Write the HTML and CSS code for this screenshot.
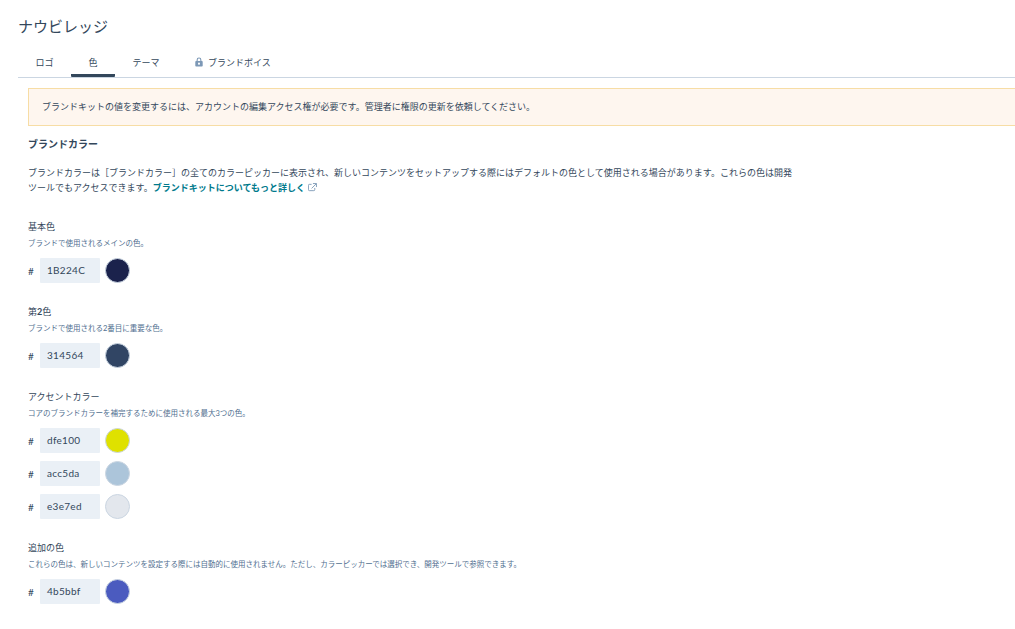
FILE: index.html
```html
<!DOCTYPE html>
<html lang="ja">
<head>
    <title>ナウビレッジ</title>
    <link rel="stylesheet" href="styles.css">
</head>
<body>
    <h1 class="page-title">ナウビレッジ</h1>

    <div class="tabs">
        <div class="tab">ロゴ</div>
        <div class="tab active">色</div>
        <div class="tab">テーマ</div>
        <div class="tab tab-lock">
            <svg class="lock" viewBox="0 0 10 10" width="10" height="10"><path fill="#7c98b6" fill-rule="evenodd" d="M2.6 4V2.9a2.4 2.4 0 0 1 4.8 0V4h.5c.5 0 .8.3.8.8v3.9c0 .5-.3.8-.8.8H2.100c-.5 0-.8-.3-.8-.8V4.800c0-.5.3-.8.8-.8zm1.100 0h2.600V2.900a1.300 1.300 0 0 0-2.600 0zM5 5.500a.9.9 0 0 0-.5 1.700V8h1v-.8A.9.9 0 0 0 5 5.500z"/></svg>
            ブランドボイス
        </div>
    </div>

    <div class="content">
        <div class="notice">ブランドキットの値を変更するには、アカウントの編集アクセス権が必要です。管理者に権限の更新を依頼してください。</div>

        <h2 class="section-title">ブランドカラー</h2>
        <p class="intro">ブランドカラーは［ブランドカラー］の全てのカラーピッカーに表示され、新しいコンテンツをセットアップする際にはデフォルトの色として使用される場合があります。これらの色は開発ツールでもアクセスできます。<a class="more" href="#">ブランドキットについてもっと詳しく<svg class="ext" viewBox="0 0 10 10" width="9" height="9"><path fill="none" stroke="#7c98b6" stroke-width="1" d="M4 1.500H1.500a1 1 0 0 0-1 1v5a1 1 0 0 0 1 1h5a1 1 0 0 0 1-1V5.500M5.500 .6h3.900v3.900M9.200 .8L4 6"/></svg></a></p>

        <div class="group">
            <div class="group-label">基本色</div>
            <div class="group-help">ブランドで使用されるメインの色。</div>
            <div class="color-row">
                <span class="hash">#</span>
                <div class="hex">1B224C</div>
                <div class="swatch swatch-1"></div>
            </div>
        </div>

        <div class="group">
            <div class="group-label">第<b>2</b>色</div>
            <div class="group-help">ブランドで使用される2番目に重要な色。</div>
            <div class="color-row">
                <span class="hash">#</span>
                <div class="hex">314564</div>
                <div class="swatch swatch-2"></div>
            </div>
        </div>

        <div class="group">
            <div class="group-label">アクセントカラー</div>
            <div class="group-help">コアのブランドカラーを補完するために使用される最大3つの色。</div>
            <div class="color-row">
                <span class="hash">#</span>
                <div class="hex">dfe100</div>
                <div class="swatch swatch-3"></div>
            </div>
            <div class="color-row">
                <span class="hash">#</span>
                <div class="hex">acc5da</div>
                <div class="swatch swatch-4"></div>
            </div>
            <div class="color-row">
                <span class="hash">#</span>
                <div class="hex">e3e7ed</div>
                <div class="swatch swatch-5"></div>
            </div>
        </div>

        <div class="group">
            <div class="group-label">追加の色</div>
            <div class="group-help">これらの色は、新しいコンテンツを設定する際には自動的に使用されません。ただし、カラーピッカーでは選択でき、開発ツールで参照できます。</div>
            <div class="color-row">
                <span class="hash">#</span>
                <div class="hex">4b5bbf</div>
                <div class="swatch swatch-6"></div>
            </div>
        </div>
    </div>
</body>
</html>
```

FILE: styles.css
```css
html, body { overflow: hidden; }
body { margin: 0; height: 629px; background: #fff; color: #33475b; font-family: Lato, "Noto Sans CJK JP", sans-serif; font-size: 9px; }

.page-title { margin: 0; padding: 16px 0 0 18px; font-size: 15px; line-height: 20px; font-weight: 400; color: #33475b; }

.tabs { display: flex; margin: 11px 0 0 18px; border-bottom: 1px solid #cbd6e2; height: 30px; }
.tab { box-sizing: border-box; height: 30px; padding-top: 9px; line-height: 13px; text-align: center; margin-right: 0; }
.tab:nth-child(1) { width: 53px; }
.tab:nth-child(2) { width: 44px; }
.tab:nth-child(3) { width: 62px; }
.tab-lock { display: flex; align-items: flex-start; gap: 4px; padding-left: 17px; }
.tab-lock .lock { margin-top: 1px; }
.active { border-bottom: 3px solid #33475b; border-radius: 1px; }

.content { padding: 10px 0 0 28px; }

.notice { box-sizing: border-box; width: 1000px; height: 38px; padding: 0 13px; line-height: 36px; background: #fef6ef; border: 1px solid #f7dda5; }

.section-title { margin: 11px 0 0; font-size: 10px; line-height: 14px; font-weight: 700; }
.intro { margin: 14px 0 0; width: 770px; line-height: 15px; }
.more { color: #007a8c; font-weight: 700; text-decoration: none; }
.ext { margin-left: 3px; vertical-align: -1px; }

.group { margin-bottom: 22px; }
.intro + .group { margin-top: 25px; }
.group-label { font-size: 9px; line-height: 14px; }
.group-label b { font-weight: 700; }
.group-help { margin-top: 3px; font-size: 7.500px; line-height: 13px; color: #516f90; }

.color-row { display: flex; align-items: center; height: 25px; margin-top: 8px; }
.color-row + .color-row { margin-top: 8px; }
.hash { width: 12px; font-size: 10px; }
.hex { box-sizing: border-box; width: 60px; height: 25px; padding-left: 7px; line-height: 25px; font-size: 10px; letter-spacing: .3px; background: #eaf0f6; border-radius: 1px; }
.swatch { box-sizing: border-box; width: 25px; height: 25px; margin-left: 5px; border: 1px solid #cbd6e2; border-radius: 50%; }

.swatch-1 { background: #1b224c; }
.swatch-2 { background: #314564; }
.swatch-3 { background: #dfe100; }
.swatch-4 { background: #acc5da; }
.swatch-5 { background: #e3e7ed; }
.swatch-6 { background: #4b5bbf; }
```
